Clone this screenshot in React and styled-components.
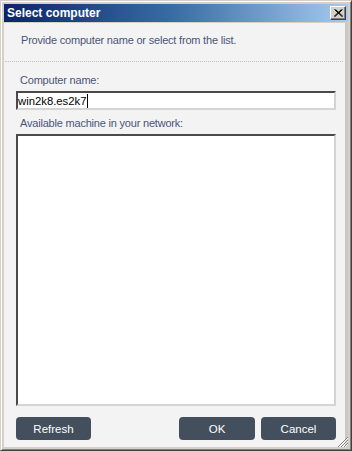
import styled, { createGlobalStyle } from 'styled-components';

const GlobalStyle = createGlobalStyle`
  html, body {
    margin: 0;
    padding: 0;
    background: #ffffff;
  }
  * {
    box-sizing: border-box;
  }
`;

const Window = styled.div`
  position: relative;
  width: 352px;
  height: 451px;
  display: flex;
  flex-direction: column;
  background: #d4d0c8;
  border-top: 1px solid #d4d0c8;
  border-left: 1px solid #d4d0c8;
  border-right: 1px solid #404040;
  border-bottom: 1px solid #404040;
  box-shadow: inset 1px 1px 0 #ffffff, inset -1px -1px 0 #808080;
  padding: 3px;
  font-family: "Liberation Sans", Arial, sans-serif;
`;

const TitleBar = styled.div`
  height: 18px;
  flex-shrink: 0;
  display: flex;
  align-items: center;
  justify-content: space-between;
  padding: 0 2px 0 3px;
  background: linear-gradient(to right, #0a246a 0%, #3a6ea5 50%, #a6caf0 100%);
`;

const Title = styled.span`
  color: #ffffff;
  font-weight: bold;
  font-size: 12px;
`;

const CloseButton = styled.button`
  width: 16px;
  height: 14px;
  padding: 0;
  display: flex;
  align-items: center;
  justify-content: center;
  background: #d4d0c8;
  border-top: 1px solid #ffffff;
  border-left: 1px solid #ffffff;
  border-right: 1px solid #404040;
  border-bottom: 1px solid #404040;
  box-shadow: inset -1px -1px 0 #808080;
`;

const Body = styled.div`
  flex: 1;
  display: flex;
  flex-direction: column;
  margin-top: 1px;
  background: #f3f3f3;
  border-right: 3px solid #c8c8c8;
`;

const Description = styled.div`
  font-size: 11px;
  letter-spacing: -0.2px;
  color: #4a5579;
  padding: 11px 0 0 17px;
  height: 38px;
`;

const Separator = styled.div`
  margin: 0 2px 0 1px;
  border-top: 1px dotted #c4c4c4;
`;

const Form = styled.div`
  flex: 1;
  display: flex;
  flex-direction: column;
  padding: 12px 9px 0 12px;
`;

const Label = styled.div`
  font-size: 11px;
  letter-spacing: -0.2px;
  color: #4a5579;
  padding-left: 4px;
  padding-top: ${p => p.$pt || 0}px;
  height: ${p => p.$h}px;
`;

const TextInput = styled.div`
  height: 19px;
  background: #ffffff;
  border-top: 2px solid #4a4a4a;
  border-left: 2px solid #4a4a4a;
  border-right: 2px solid #d4d4d4;
  border-bottom: 2px solid #d4d4d4;
  font-size: 11.3px;
  color: #000000;
  display: flex;
  align-items: center;
`;

const Caret = styled.span`
  display: inline-block;
  width: 1px;
  height: 14px;
  background: #000;
  margin-left: 1px;
`;

const ListBox = styled.div`
  height: 272px;
  background: #ffffff;
  border-top: 2px solid #4a4a4a;
  border-left: 2px solid #4a4a4a;
  border-right: 2px solid #d4d4d4;
  border-bottom: 2px solid #d4d4d4;
`;

const ButtonRow = styled.div`
  display: flex;
  align-items: center;
  padding-top: 11px;
`;

const Button = styled.button`
  width: ${p => p.$w}px;
  height: 23px;
  border: none;
  border-radius: 4px;
  background: #444f5e;
  color: #ffffff;
  font-family: "Liberation Sans", Arial, sans-serif;
  font-size: 11.5px;
  padding: 0;
  margin-left: ${p => p.$ml || 0}px;
`;

const Spacer = styled.div`
  flex: 1;
`;

const Grip = styled.svg`
  position: absolute;
  right: 2px;
  bottom: 2px;
`;

export default function App() {
  return (
    <>
      <GlobalStyle />
      <Window>
        <TitleBar>
          <Title>Select computer</Title>
          <CloseButton>
            <svg width="9" height="8" viewBox="0 0 9 8">
              <path d="M0.5 0.5 L8 7.5 M1.5 0.5 L9 7.5 M7.5 0.5 L0 7.5 M8.5 0.5 L1 7.5" stroke="#000" strokeWidth="1" />
            </svg>
          </CloseButton>
        </TitleBar>
        <Body>
          <Description>Provide computer name or select from the list.</Description>
          <Separator />
          <Form>
            <Label $h={17}>Computer name:</Label>
            <TextInput>
              win2k8.es2k7<Caret />
            </TextInput>
            <Label $h={24} $pt={7}>Available machine in your network:</Label>
            <ListBox />
            <ButtonRow>
              <Button $w={75}>Refresh</Button>
              <Spacer />
              <Button $w={76}>OK</Button>
              <Button $w={75} $ml={6}>Cancel</Button>
            </ButtonRow>
          </Form>
        </Body>
        <Grip width="12" height="12" viewBox="0 0 12 12">
          <path d="M11 1 L1 11 M11 4 L4 11 M11 7 L7 11" stroke="#808080" strokeWidth="1" />
          <path d="M11 2 L2 11 M11 5 L5 11 M11 8 L8 11" stroke="#ffffff" strokeWidth="1" />
        </Grip>
      </Window>
    </>
  );
}
